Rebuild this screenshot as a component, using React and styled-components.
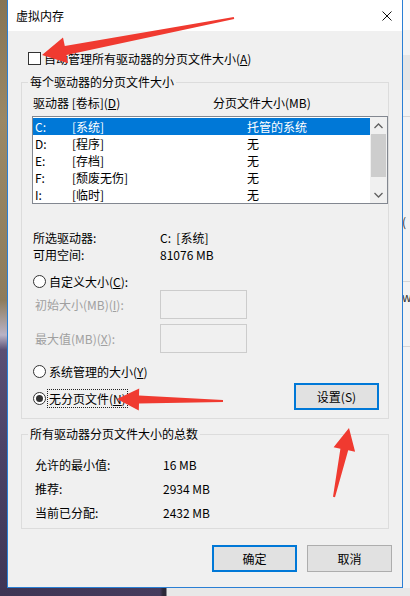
import { Fragment } from "react";
import styled, { createGlobalStyle } from "styled-components";

const GlobalStyle = createGlobalStyle`
  html, body {
    margin: 0;
    padding: 0;
  }
  body {
    width: 410px;
    height: 596px;
    overflow: hidden;
    font-family: "Noto Sans CJK SC", "Noto Sans", sans-serif;
    font-size: 12px;
    color: #000;
  }
  * {
    box-sizing: border-box;
  }
`;

const drives = [
  { letter: "C:", label: "[系统]", size: "托管的系统", selected: true },
  { letter: "D:", label: "[程序]", size: "无" },
  { letter: "E:", label: "[存档]", size: "无" },
  { letter: "F:", label: "[颓废无伤]", size: "无" },
  { letter: "I:", label: "[临时]", size: "无" },
];

const totals = [
  ["允许的最小值:", "16 MB"],
  ["推荐:", "2934 MB"],
  ["当前已分配:", "2432 MB"],
];

function App() {
  return (
    <Desktop>
      <GlobalStyle />
      <LeftWallpaper />

      <Dialog>
        <TitleBar>
          <span>虚拟内存</span>
          <svg width="10" height="10" viewBox="0 0 10 10">
            <path d="M0.5 0.5 L9.5 9.5 M9.5 0.5 L0.5 9.5" stroke="#111" strokeWidth="1" />
          </svg>
        </TitleBar>

        <Body>
          <CheckRow>
            <CheckBox />
            <span>自动管理所有驱动器的分页文件大小(<u>A</u>)</span>
          </CheckRow>

          <Group>
            <Legend>每个驱动器的分页文件大小</Legend>
            <GroupInner $pad="5px 0 8px 10px">
              <ListHeader>
                <span>驱动器 [卷标](<u>D</u>)</span>
                <span>分页文件大小(MB)</span>
              </ListHeader>

              <ListBox>
                <Rows>
                  {drives.map((d) => (
                    <DriveRow key={d.letter} $selected={d.selected}>
                      <span>{d.letter}</span>
                      <span>{d.label}</span>
                      <span>{d.size}</span>
                    </DriveRow>
                  ))}
                </Rows>
                <ScrollBar>
                  <ScrollArrow>
                    <svg width="9" height="6" viewBox="0 0 9 6">
                      <path d="M0.5 5 L4.5 1 L8.5 5" fill="none" stroke="#606060" strokeWidth="1.3" />
                    </svg>
                  </ScrollArrow>
                  <Track>
                    <Thumb />
                  </Track>
                  <ScrollArrow>
                    <svg width="9" height="6" viewBox="0 0 9 6">
                      <path d="M0.5 1 L4.5 5 L8.5 1" fill="none" stroke="#606060" strokeWidth="1.3" />
                    </svg>
                  </ScrollArrow>
                </ScrollBar>
              </ListBox>

              <InfoGrid $top={25} $col={127} $row={17}>
                <span>所选驱动器:</span>
                <span>C:&nbsp;&nbsp;[系统]</span>
                <span>可用空间:</span>
                <span>81076 MB</span>
              </InfoGrid>

              <RadioRow $top={10}>
                <Radio />
                <span>自定义大小(<u>C</u>):</span>
              </RadioRow>

              <SizeRow>
                <span>初始大小(MB)(<u>I</u>):</span>
                <SizeInput disabled />
              </SizeRow>
              <SizeRow $top={5}>
                <span>最大值(MB)(<u>X</u>):</span>
                <SizeInput disabled />
              </SizeRow>

              <RadioRow $top={10}>
                <Radio />
                <span>系统管理的大小(<u>Y</u>)</span>
              </RadioRow>

              <SetRow>
                <RadioRow $top={3}>
                  <Radio $checked />
                  <FocusLabel>无分页文件(<u>N</u>)</FocusLabel>
                </RadioRow>
                <Button $primary>设置(S)</Button>
              </SetRow>
            </GroupInner>
          </Group>

          <Group $top={7}>
            <Legend>所有驱动器分页文件大小的总数</Legend>
            <GroupInner $pad="10px 0 4px 12px">
              <InfoGrid $top={0} $col={128} $row={24}>
                {totals.map(([k, v]) => (
                  <Fragment key={k}>
                    <span>{k}</span>
                    <span>{v}</span>
                  </Fragment>
                ))}
              </InfoGrid>
            </GroupInner>
          </Group>

          <ButtonRow>
            <Button $primary>确定</Button>
            <Button>取消</Button>
          </ButtonRow>
        </Body>
      </Dialog>

      {/* the window behind the dialog, only a sliver visible */}
      <RightWindow>
        <Band $h={30} $bg="#fbfbfb" />
        <Band $h={25} $bg="#f3f3f3" />
        <Band $h={35} $bg="#e6e6e6" />
        <Band $h={27} $bg="#f3f3f3" $line />
        <Band $h={85} $bg="#f3f3f3" />
        <Glyph $h={40}>(</Glyph>
        <Band $h={40} $bg="#f3f3f3" $line />
        <Glyph $h={30}>w</Glyph>
        <Band $h={35} $bg="#f3f3f3" $line />
        <Band $h={241} $bg="#f3f3f3" />
      </RightWindow>

      <BottomWallpaper />

      <Arrows viewBox="0 0 410 596" width="410" height="596">
        <polygon
          fill="#f03a30"
          points="42,55 63,37.5 64.8,46.1 233.8,17 234.2,19 66.5,54.9 68.1,63.3"
        />
        <polygon
          fill="#f03a30"
          points="117,399 139.2,388.4 139,395.4 223,400 223,402 139,403.4 138.8,410.4"
        />
        <polygon
          fill="#f03a30"
          points="349,428 333.6,447.2 340.4,448.7 333,496.8 335,497.2 348.2,450.3 355.1,451.8"
        />
      </Arrows>
    </Desktop>
  );
}

export default App;

const Desktop = styled.div`
  position: relative;
  display: grid;
  grid-template-columns: 7px 396px 7px;
  grid-template-rows: 588px 8px;
  width: 410px;
  height: 596px;
  overflow: hidden;
`;

const LeftWallpaper = styled.div`
  background: linear-gradient(
    to bottom,
    #857455 0px,
    #9a8865 120px,
    #8d7c5c 300px,
    #b9b3c6 335px,
    #5a4f74 350px,
    #4b4266 450px,
    #3f3656 588px
  );
`;

const BottomWallpaper = styled.div`
  grid-column: 1 / -1;
  background: linear-gradient(
    to right,
    #3e3554 0px,
    #463c5e 160px,
    #2c2838 163px,
    #2c2838 166px,
    #e8e8e8 167px
  );
`;

const Dialog = styled.div`
  display: flex;
  flex-direction: column;
  border: 1px solid #2a7fd4;
  border-top: none;
  background: #f0f0f0;
`;

const TitleBar = styled.div`
  display: flex;
  align-items: center;
  justify-content: space-between;
  height: 31px;
  padding: 0 10px 0 8px;
  background: #fff;
  font-size: 12px;
`;

const Body = styled.div`
  display: flex;
  flex-direction: column;
  flex: 1;
  padding: 19px 13px 0;
  background: #f0f0f0;
`;

const CheckRow = styled.div`
  display: flex;
  align-items: center;
  gap: 3px;
  height: 16px;
  margin-left: 7px;
`;

const CheckBox = styled.span`
  width: 13px;
  height: 13px;
  border: 1px solid #333;
  background: #fff;
`;

const Group = styled.fieldset`
  margin: ${(p) => p.$top ?? 8}px 0 0;
  padding: 0;
  min-width: 0;
  border: 1px solid #dcdcdc;
`;

const Legend = styled.legend`
  margin-left: 6px;
  padding: 0 2px;
  line-height: 16px;
  height: 16px;
`;

const GroupInner = styled.div`
  display: flex;
  flex-direction: column;
  padding: ${(p) => p.$pad};
`;

const ListHeader = styled.div`
  display: grid;
  grid-template-columns: 180px 1fr;
  height: 16px;
  line-height: 16px;
  padding-left: 1px;
`;

const ListBox = styled.div`
  display: flex;
  height: 88px;
  margin-top: 5px;
  border: 1px solid #828790;
  background: #fff;
`;

const Rows = styled.div`
  flex: 1;
  padding-top: 1px;
`;

const DriveRow = styled.div`
  display: grid;
  grid-template-columns: 37px 175px 1fr;
  height: 17px;
  line-height: 17px;
  padding-left: 2px;
  background: ${(p) => (p.$selected ? "#0078d7" : "transparent")};
  color: ${(p) => (p.$selected ? "#fff" : "#000")};
`;

const ScrollBar = styled.div`
  display: flex;
  flex-direction: column;
  width: 17px;
  background: #f0f0f0;
`;

const ScrollArrow = styled.div`
  display: flex;
  align-items: center;
  justify-content: center;
  height: 17px;
`;

const Track = styled.div`
  flex: 1;
  padding: 0 1px 9px;
  display: flex;
`;

const Thumb = styled.div`
  flex: 1;
  background: #cdcdcd;
`;

const InfoGrid = styled.div`
  display: grid;
  grid-template-columns: ${(p) => p.$col}px 1fr;
  grid-auto-rows: ${(p) => p.$row}px;
  align-items: center;
  margin-top: ${(p) => p.$top}px;
  padding-left: 1px;
`;

const RadioRow = styled.div`
  display: flex;
  align-items: center;
  gap: 3px;
  height: 17px;
  margin-top: ${(p) => p.$top ?? 0}px;
  padding-left: 1px;
`;

const Radio = styled.span`
  position: relative;
  width: 13px;
  height: 13px;
  border: 1px solid #333;
  border-radius: 50%;
  background: #fff;

  &::after {
    content: "";
    display: ${(p) => (p.$checked ? "block" : "none")};
    position: absolute;
    inset: 2px;
    border-radius: 50%;
    background: #333;
  }
`;

const FocusLabel = styled.span`
  outline: 1px dotted #222;
  outline-offset: 0;
  padding: 0 1px;
  line-height: 17px;
  margin-left: -1px;
`;

const SizeRow = styled.div`
  display: grid;
  grid-template-columns: 125px 87px;
  align-items: center;
  height: 29px;
  margin-top: ${(p) => p.$top ?? 0}px;
  padding-left: 3px;
  color: #a0a0a0;
`;

const SizeInput = styled.input`
  width: 87px;
  height: 29px;
  border: 1px solid #cccccc;
  background: #f0f0f0;
`;

const SetRow = styled.div`
  display: flex;
  align-items: center;
  justify-content: space-between;
  margin-top: 3px;
  padding-right: 9px;
`;

const Button = styled.button`
  width: 85px;
  height: 27px;
  padding: 0;
  font-family: inherit;
  font-size: 12px;
  color: #000;
  background: #e1e1e1;
  border: ${(p) => (p.$primary ? "2px solid #0078d7" : "1px solid #adadad")};
`;

const ButtonRow = styled.div`
  display: flex;
  justify-content: flex-end;
  gap: 10px;
  margin: 16px -3px 0 0;
`;

const RightWindow = styled.div`
  display: flex;
  flex-direction: column;
  overflow: hidden;
  background: #f3f3f3;
`;

const Band = styled.div`
  flex: none;
  height: ${(p) => p.$h}px;
  background: ${(p) => p.$bg};
  border-bottom: ${(p) => (p.$line ? "1px solid #d6d6d6" : "none")};
`;

const Glyph = styled.div`
  flex: none;
  height: ${(p) => p.$h}px;
  line-height: ${(p) => p.$h}px;
  margin-left: -1px;
  font-size: 12px;
  color: #333;
`;

const Arrows = styled.svg`
  position: absolute;
  top: 0;
  left: 0;
  pointer-events: none;
`;
